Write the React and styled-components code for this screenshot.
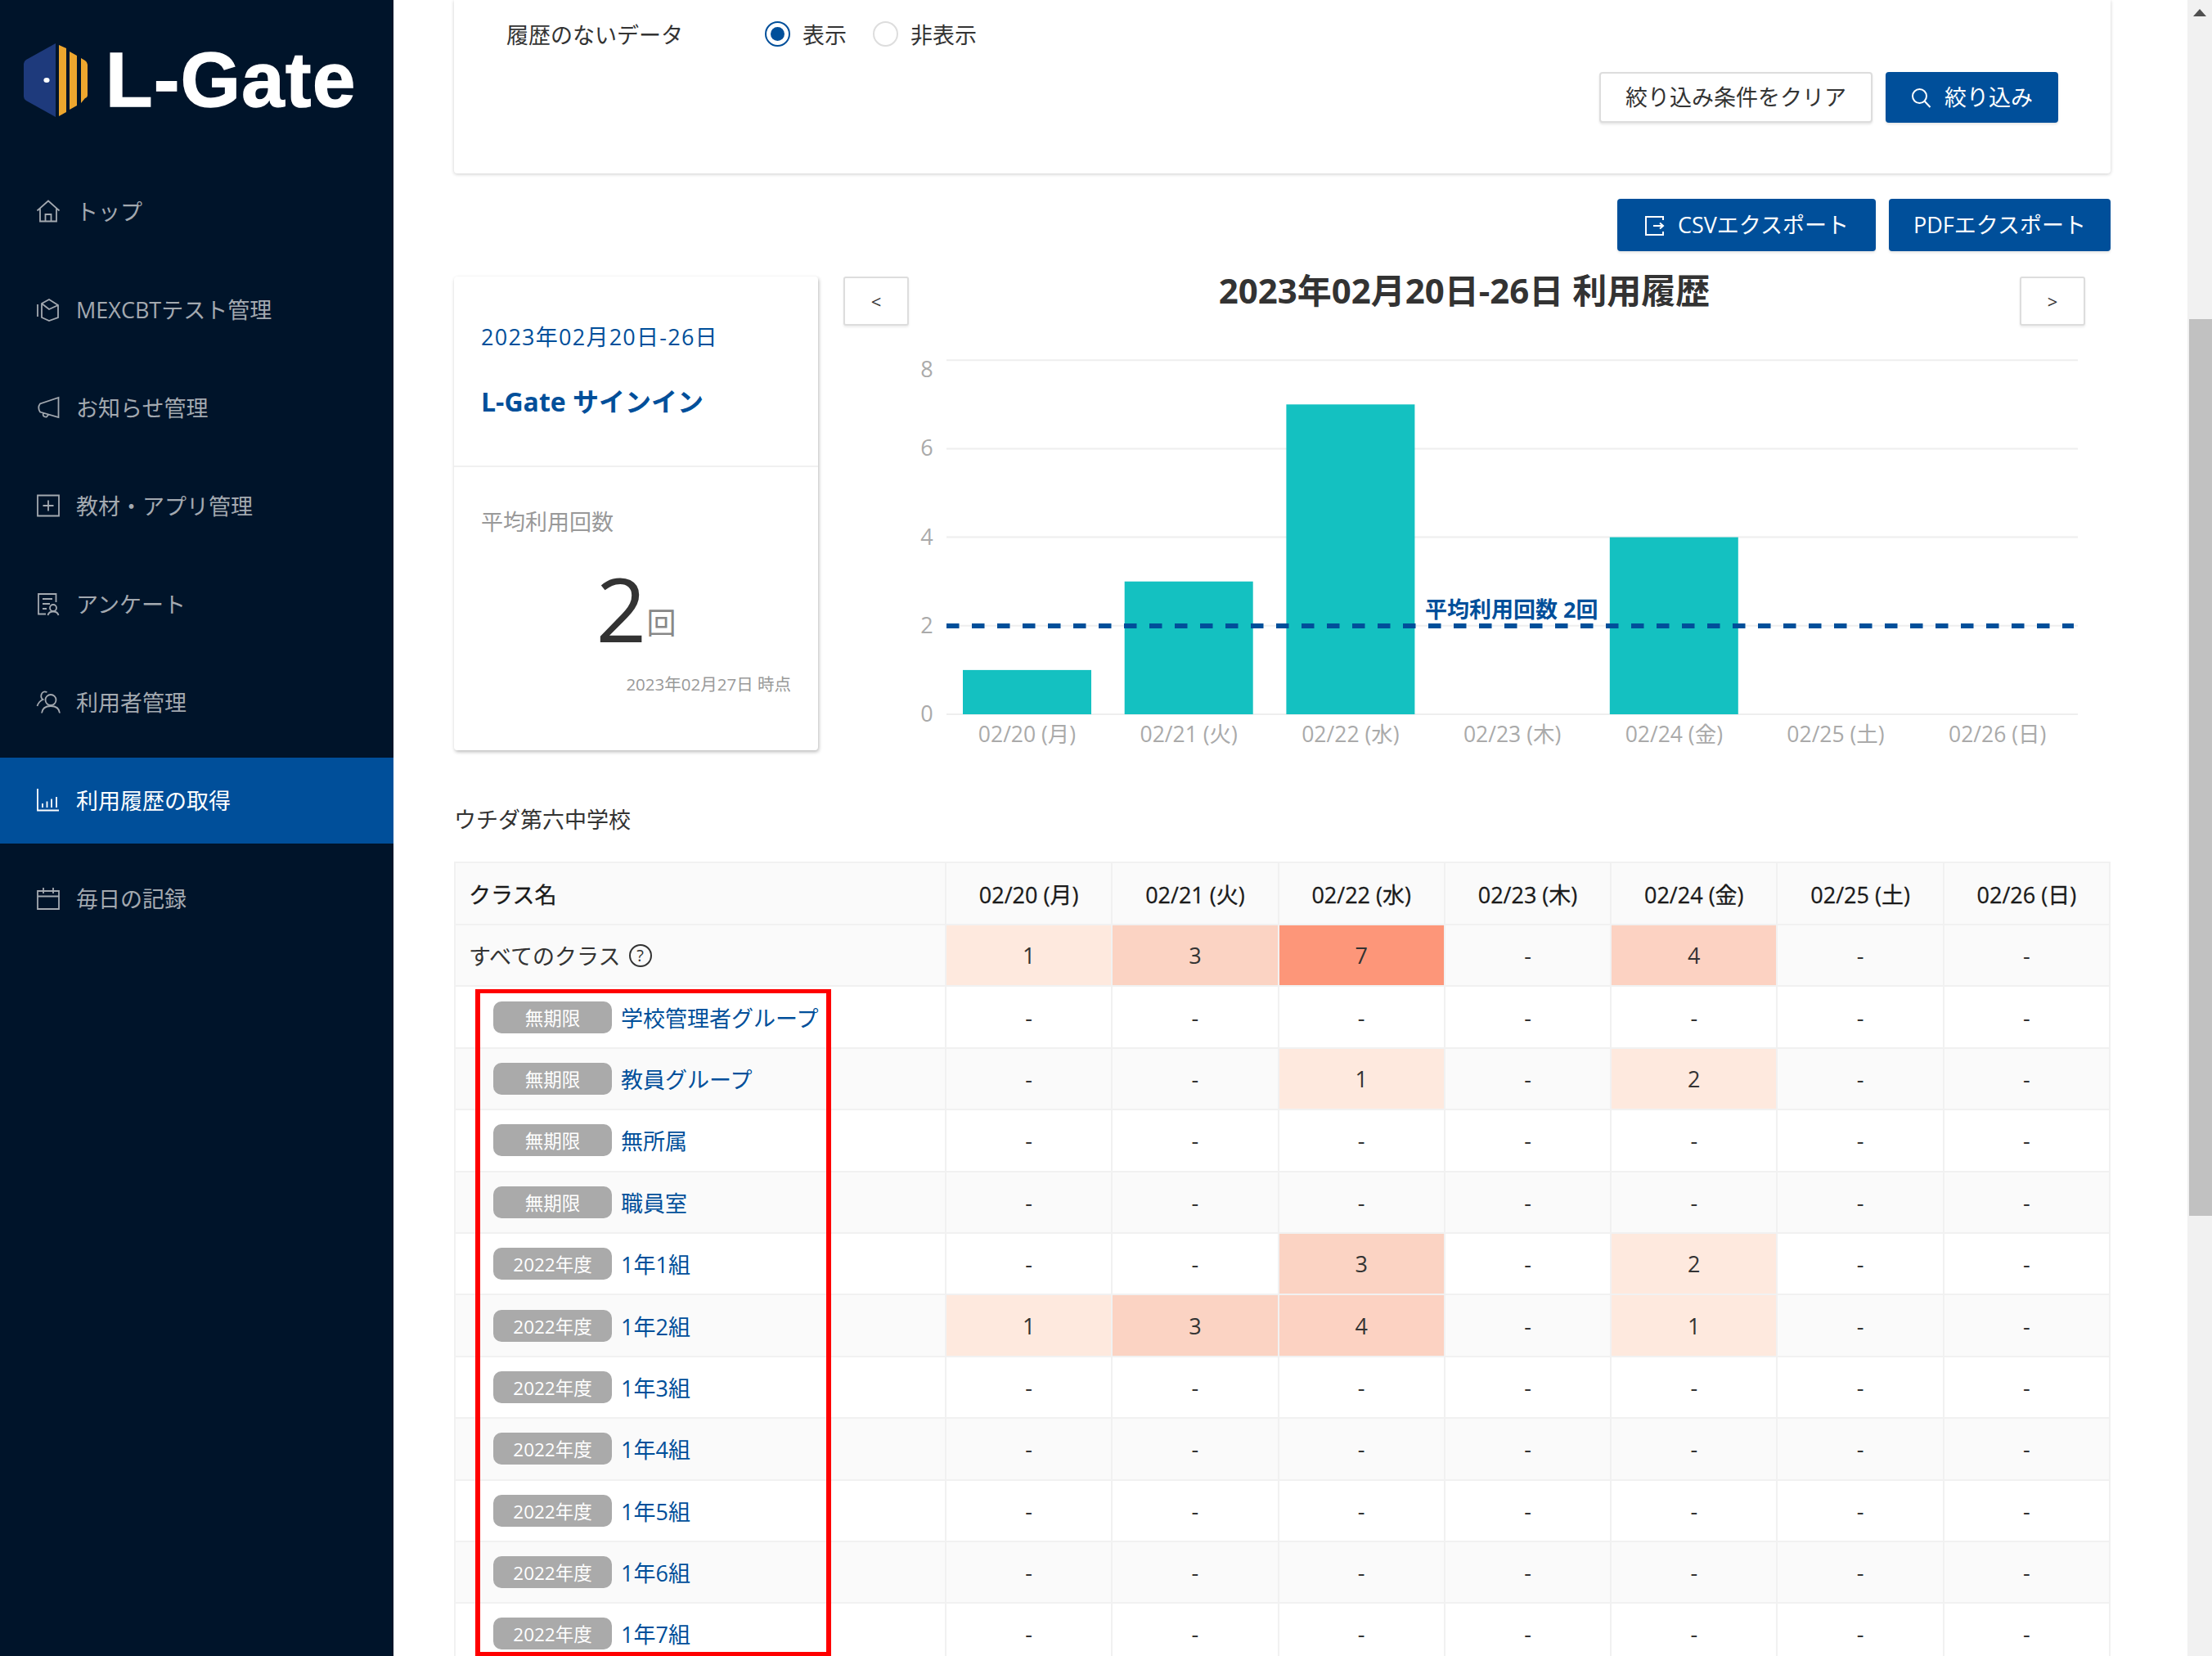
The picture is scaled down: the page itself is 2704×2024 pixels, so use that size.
import React from "react";
import styled, { createGlobalStyle } from "styled-components";

const NAVY = "#004f9a";
const FONT = `"Open Sans", "Noto Sans CJK JP", sans-serif`;

const Global = createGlobalStyle`
  html, body { margin: 0; padding: 0; background: #fff; }
  body { font-family: ${FONT}; color: #333; font-size: 27px; }
  * { box-sizing: border-box; }
`;

const Page = styled.div`
  width: 2704px;
  height: 2024px;
  display: flex;
  overflow: hidden;
  background: #fff;
`;

/* ---------- sidebar ---------- */
const Sidebar = styled.aside`
  width: 481px;
  flex: none;
  background: #00142a;
  display: flex;
  flex-direction: column;
`;
const Brand = styled.div`
  height: 206px;
  padding: 53px 0 0 29px;
  display: flex;
  align-items: flex-start;
  gap: 22px;
`;
const BrandName = styled.div`
  font-family: "Liberation Sans", Arial, sans-serif;
  font-weight: 700;
  font-size: 94px;
  line-height: 90px;
  letter-spacing: 1.5px;
  color: #fff;
  -webkit-text-stroke: 1.5px #fff;
`;
const NavList = styled.nav`
  display: flex;
  flex-direction: column;
  gap: 15px;
`;
const NavItem = styled.div`
  height: 105px;
  padding: 0 0 2px 44px;
  display: flex;
  align-items: center;
  gap: 19px;
  font-size: 27px;
  color: ${(p) => (p.$active ? "#fff" : "#a3a9b0")};
  background: ${(p) => (p.$active ? NAVY : "transparent")};
`;
const NavGlyph = styled.svg`
  width: 30px;
  height: 30px;
  flex: none;
  fill: none;
  stroke: currentColor;
  stroke-width: 1.8;
`;

/* ---------- main ---------- */
const Main = styled.main`
  flex: 1;
  min-width: 0;
  padding: 0 94px 0 74px;
`;
const FilterCard = styled.section`
  height: 212px;
  padding: 14px 64px 0;
  background: #fff;
  border-radius: 0 0 4px 4px;
  box-shadow: 0 1px 4px rgba(0, 0, 0, 0.2);
`;
const FilterRow = styled.div`
  height: 54px;
  display: flex;
  align-items: center;
`;
const FilterLabel = styled.div`
  width: 316px;
`;
const RadioOption = styled.label`
  display: flex;
  align-items: center;
  gap: 15px;
  margin-right: 32px;
`;
const RadioDot = styled.span`
  width: 31px;
  height: 31px;
  border-radius: 50%;
  border: 2px solid ${(p) => (p.$on ? NAVY : "#ddd")};
  display: flex;
  align-items: center;
  justify-content: center;
  &::after {
    content: "";
    width: 17px;
    height: 17px;
    border-radius: 50%;
    background: ${(p) => (p.$on ? NAVY : "transparent")};
  }
`;
const ButtonRow = styled.div`
  display: flex;
  justify-content: flex-end;
  gap: 16px;
  margin-top: ${(p) => p.$top || 0}px;
`;
const Button = styled.button`
  height: ${(p) => p.$h || 62}px;
  padding: 0 ${(p) => p.$pad || 30}px 3px;
  display: flex;
  align-items: center;
  gap: 16px;
  font: inherit;
  font-size: 27px;
  border-radius: 4px;
  color: ${(p) => (p.$primary ? "#fff" : "#333")};
  background: ${(p) => (p.$primary ? NAVY : "#fff")};
  border: ${(p) => (p.$primary ? "none" : "2px solid #ddd")};
  box-shadow: 0 2px 3px rgba(0, 0, 0, 0.1);
`;
const BtnGlyph = styled.svg`
  width: 25px;
  height: 25px;
  flex: none;
  fill: none;
  stroke: #fff;
  stroke-width: 2;
  margin-top: 3px;
`;

/* ---------- overview ---------- */
const Overview = styled.section`
  display: flex;
  margin-top: 31px;
`;
const SummaryCard = styled.div`
  width: 445px;
  height: 579px;
  flex: none;
  background: #fff;
  border-radius: 4px;
  box-shadow: 1px 2px 4px rgba(0, 0, 0, 0.28);
  display: flex;
  flex-direction: column;
`;
const SummaryHead = styled.div`
  height: 233px;
  padding: 55px 33px 0;
  border-bottom: 2px solid #f0f0f0;
`;
const SummaryDate = styled.div`
  color: ${NAVY};
  line-height: 38px;
  letter-spacing: 1.25px;
`;
const SummaryTitle = styled.div`
  color: ${NAVY};
  font-weight: 700;
  font-size: 32px;
  line-height: 44px;
  margin-top: 38px;
`;
const SummaryBody = styled.div`
  flex: 1;
  padding: 48px 33px 0;
`;
const SummaryLabel = styled.div`
  color: #999;
  line-height: 38px;
`;
const BigRow = styled.div`
  display: flex;
  justify-content: center;
  align-items: flex-end;
  gap: 0;
  margin-top: 33px;
`;
const BigNumber = styled.span`
  font-size: 108px;
  line-height: 1;
  color: #333;
`;
const BigUnit = styled.span`
  display: block;
  margin-bottom: 18px;
  font-size: 36px;
  line-height: 36px;
  color: #888;
`;
const AsOf = styled.div`
  margin-top: 23px;
  text-align: right;
  font-size: 20.5px;
  line-height: 30px;
  color: #999;
`;
const ChartPanel = styled.div`
  width: 1518px;
  margin-left: 31px;
`;
const ChartNav = styled.div`
  display: flex;
  justify-content: space-between;
  align-items: flex-start;
`;
const ChartTitle = styled.h2`
  margin: 0;
  font-size: 42px;
  line-height: 34px;
  font-weight: 700;
  color: #333;
`;
const PageButton = styled.button`
  width: 80px;
  height: 60px;
  font: inherit;
  font-size: 22px;
  color: #333;
  background: #fff;
  border: 2px solid #ddd;
  border-radius: 3px;
  box-shadow: 0 2px 3px rgba(0, 0, 0, 0.08);
`;
const ChartSvg = styled.svg`
  display: block;
  width: 1518px;
  height: 510px;
  margin-top: 12px;
  text {
    font-family: ${FONT};
    font-size: 27px;
    fill: #aaa;
  }
  text.day {
    font-size: 26.5px;
  }
  text.avg {
    font-size: 27px;
    font-weight: 700;
    fill: ${NAVY};
  }
`;

/* ---------- table ---------- */
const SchoolName = styled.div`
  margin-top: 63px;
  line-height: 38px;
`;
const TableWrap = styled.div`
  position: relative;
  margin-top: 32px;
`;
const Table = styled.table`
  width: 2025px;
  table-layout: fixed;
  border-collapse: collapse;
`;
const NameCol = styled.col`
  width: 600px;
`;
const HeadCell = styled.th`
  height: 76px;
  padding: 0;
  font-size: 27px;
  font-weight: 400;
  color: #1a1a1a;
  -webkit-text-stroke: 0.3px #1a1a1a;
  background: #fafafa;
  border: 2px solid #f1f1f1;
  text-align: ${(p) => (p.$left ? "left" : "center")};
  padding-left: ${(p) => (p.$left ? "16px" : "0")};
`;
const Row = styled.tr`
  background: ${(p) => (p.$alt ? "#fafafa" : "#fff")};
`;
const NameCell = styled.td`
  height: 75.4px;
  padding: 0 0 0 ${(p) => (p.$all ? 16 : 46)}px;
  border: 2px solid #f1f1f1;
  white-space: nowrap;
`;
const NameInner = styled.div`
  display: flex;
  align-items: center;
  gap: ${(p) => p.$gap}px;
`;
const Badge = styled.span`
  width: 145px;
  height: 39px;
  flex: none;
  display: flex;
  align-items: center;
  justify-content: center;
  border-radius: 10px;
  background: #aaa;
  color: #fff;
  font-size: 22.5px;
`;
const ClassLink = styled.a`
  color: ${NAVY};
  font-size: 27px;
`;
const Help = styled.span`
  width: 28px;
  height: 28px;
  flex: none;
  border: 2px solid #333;
  border-radius: 50%;
  display: flex;
  align-items: center;
  justify-content: center;
  font-size: 20px;
  color: #333;
`;
const DataCell = styled.td`
  height: 75.4px;
  padding: 0;
  text-align: center;
  font-size: 27px;
  color: #333;
  border: 2px solid #f1f1f1;
  background: ${(p) => p.$heat || "transparent"};
`;
const Annotation = styled.div`
  position: absolute;
  left: 26px;
  top: 156px;
  width: 435px;
  height: 815px;
  border-style: solid;
  border-color: #ff0000;
  border-width: 5px 6px;
  pointer-events: none;
`;

/* ---------- scrollbar ---------- */
const ScrollTrack = styled.div`
  width: 30px;
  flex: none;
  background: #f1f1f1;
`;
const ScrollArrow = styled.div`
  width: 0;
  height: 0;
  margin: 11px auto 0;
  border-left: 8px solid transparent;
  border-right: 8px solid transparent;
  border-bottom: 9px solid #505050;
`;
const ScrollThumb = styled.div`
  height: 1096px;
  margin: 370px 0 0 2px;
  background: #c1c1c1;
`;

/* ---------- drawings ---------- */
const Logo = () => (
  <svg width="78" height="90" viewBox="0 0 78 90" style={{ flex: "none" }}>
    <path d="M39 0V90L3 70Q0 68 0 65V25Q0 22 3 20Z" fill="#1e3a7c" />
    <ellipse cx="28" cy="45" rx="3.6" ry="3" fill="#fff" />
    <path d="M43 2L52 6V84L43 89Z" fill="#eda62e" />
    <path d="M56 10L65 15V76L56 81Z" fill="#eda62e" />
    <path d="M70 18L75 21Q78 23 78 26V63Q78 66 75 67L70 73Z" fill="#eda62e" />
  </svg>
);

const icons = {
  home: (
    <path d="M1.5 14.5L15 2.5L28.5 14.5M5 12V27.5H25V12M11.5 27.5V19H18.5V27.5" />
  ),
  test: (
    <path d="M2 9V24M7 12V25L16 29L27 25V10L16 3L7 8V12M7 8L16 15L27 10" />
  ),
  notice: (
    <path d="M27.5 3V27L5 20.5Q1.5 15 5 10.5ZM9 21.5Q7.5 27 13 26.5L15 24" />
  ),
  plus: <path d="M2 2.5H28V27.5H2ZM15 8.5V21.5M8.5 15H21.5" />,
  survey: (
    <>
      <path d="M24.5 13V3H3V27.5H12M8 9H20M8 15H17M8 21H13" />
      <circle cx="21" cy="20" r="4" />
      <path d="M14.5 29Q15.5 24.5 21 24.5Q26.5 24.5 27.5 29" />
    </>
  ),
  users: (
    <>
      <circle cx="18" cy="12.5" r="6.5" />
      <path d="M7 28.5Q8 20 18 20Q28 20 29 28.5" />
      <path d="M13.5 3Q8 1 6.5 6Q5.5 10 8.5 12Q3.5 14 1.5 20" />
    </>
  ),
  chart: (
    <path d="M2 1V27.5H28M8 24V19M13.5 24V16.5M19 24V13.5M25 24V11" />
  ),
  calendar: (
    <path d="M2 6H28V28H2ZM2 12.5H28M9 2V9M21 2V9" />
  ),
};

const NavIcon = ({ name }) => <NavGlyph viewBox="0 0 30 30">{icons[name]}</NavGlyph>;

const SearchIcon = () => (
  <BtnGlyph viewBox="0 0 25 25">
    <circle cx="10.5" cy="10.5" r="8.5" />
    <path d="M16.5 16.5L23.5 24" />
  </BtnGlyph>
);
const ExportIcon = () => (
  <BtnGlyph viewBox="0 0 25 25">
    <path d="M23 6V2H2V24H23V20M11 13H23M19 9.5L23 13L19 16.5" />
  </BtnGlyph>
);

/* ---------- data ---------- */
const NAV = [
  ["home", "トップ"],
  ["test", "MEXCBTテスト管理"],
  ["notice", "お知らせ管理"],
  ["plus", "教材・アプリ管理"],
  ["survey", "アンケート"],
  ["users", "利用者管理"],
  ["chart", "利用履歴の取得", true],
  ["calendar", "毎日の記録"],
];
const DAYS = ["02/20 (月)", "02/21 (火)", "02/22 (水)", "02/23 (木)", "02/24 (金)", "02/25 (土)", "02/26 (日)"];
const TOTALS = [1, 3, 7, 0, 4, 0, 0];
const HEAT = { 1: "#fee9de", 2: "#fee9de", 3: "#fbd3c3", 4: "#fcd2c2", 7: "#fd9679" };
const ROWS = [
  ["無期限", "学校管理者グループ", [0, 0, 0, 0, 0, 0, 0]],
  ["無期限", "教員グループ", [0, 0, 1, 0, 2, 0, 0]],
  ["無期限", "無所属", [0, 0, 0, 0, 0, 0, 0]],
  ["無期限", "職員室", [0, 0, 0, 0, 0, 0, 0]],
  ["2022年度", "1年1組", [0, 0, 3, 0, 2, 0, 0]],
  ["2022年度", "1年2組", [1, 3, 4, 0, 1, 0, 0]],
  ["2022年度", "1年3組", [0, 0, 0, 0, 0, 0, 0]],
  ["2022年度", "1年4組", [0, 0, 0, 0, 0, 0, 0]],
  ["2022年度", "1年5組", [0, 0, 0, 0, 0, 0, 0]],
  ["2022年度", "1年6組", [0, 0, 0, 0, 0, 0, 0]],
  ["2022年度", "1年7組", [0, 0, 0, 0, 0, 0, 0]],
];

const Cells = ({ values }) =>
  values.map((v, i) => (
    <DataCell key={i} $heat={HEAT[v]}>
      {v || "-"}
    </DataCell>
  ));

/* chart is drawn in page coordinates through its viewBox */
const UNIT = 54.1;
const BASE = 873;
const Chart = () => (
  <ChartSvg viewBox="1031 410 1518 510">
    {[0, 2, 4, 6, 8].map((t) => (
      <line key={t} x1="1157" x2="2540" y1={BASE - t * UNIT} y2={BASE - t * UNIT} stroke="#eee" strokeWidth="2" />
    ))}
    {[0, 2, 4, 6, 8].map((t) => (
      <text key={t} x="1133" y={(t === 8 ? 452 : BASE - t * UNIT) + 9} textAnchor="middle">
        {t}
      </text>
    ))}
    {TOTALS.map((v, i) =>
      v ? (
        <rect key={i} x={1177 + i * 197.7} y={BASE - v * UNIT} width="157" height={v * UNIT} fill="#14c1c1" />
      ) : null
    )}
    <line x1="1157" x2="2535" y1="765" y2="765" stroke={NAVY} strokeWidth="6" strokeDasharray="15.5 15.5" />
    <text className="avg" x="1742" y="755">
      平均利用回数 2回
    </text>
    {DAYS.map((d, i) => (
      <text key={d} className="day" x={1255.5 + i * 197.7} y="907" textAnchor="middle">
        {d}
      </text>
    ))}
  </ChartSvg>
);

export default function App() {
  return (
    <Page>
      <Global />
      <Sidebar>
        <Brand>
          <Logo />
          <BrandName>L-Gate</BrandName>
        </Brand>
        <NavList>
          {NAV.map(([icon, label, active]) => (
            <NavItem key={label} $active={active}>
              <NavIcon name={icon} />
              {label}
            </NavItem>
          ))}
        </NavList>
      </Sidebar>

      <Main>
        <FilterCard>
          <FilterRow>
            <FilterLabel>履歴のないデータ</FilterLabel>
            <RadioOption>
              <RadioDot $on />
              表示
            </RadioOption>
            <RadioOption>
              <RadioDot />
              非表示
            </RadioOption>
          </FilterRow>
          <ButtonRow $top={20}>
            <Button>絞り込み条件をクリア</Button>
            <Button $primary $pad={31}>
              <SearchIcon />
              絞り込み
            </Button>
          </ButtonRow>
        </FilterCard>

        <ButtonRow $top={31}>
          <Button $primary $h={64} $pad={33}>
            <ExportIcon />
            CSVエクスポート
          </Button>
          <Button $primary $h={64} $pad={30}>
            PDFエクスポート
          </Button>
        </ButtonRow>

        <Overview>
          <SummaryCard>
            <SummaryHead>
              <SummaryDate>2023年02月20日-26日</SummaryDate>
              <SummaryTitle>L-Gate サインイン</SummaryTitle>
            </SummaryHead>
            <SummaryBody>
              <SummaryLabel>平均利用回数</SummaryLabel>
              <BigRow>
                <BigNumber>2</BigNumber>
                <BigUnit>回</BigUnit>
              </BigRow>
              <AsOf>2023年02月27日 時点</AsOf>
            </SummaryBody>
          </SummaryCard>
          <ChartPanel>
            <ChartNav>
              <PageButton>&lt;</PageButton>
              <ChartTitle>2023年02月20日-26日 利用履歴</ChartTitle>
              <PageButton>&gt;</PageButton>
            </ChartNav>
            <Chart />
          </ChartPanel>
        </Overview>

        <SchoolName>ウチダ第六中学校</SchoolName>
        <TableWrap>
          <Table>
            <colgroup>
              <NameCol />
              {DAYS.map((d) => (
                <col key={d} />
              ))}
            </colgroup>
            <thead>
              <tr>
                <HeadCell $left>クラス名</HeadCell>
                {DAYS.map((d) => (
                  <HeadCell key={d}>{d}</HeadCell>
                ))}
              </tr>
            </thead>
            <tbody>
              <Row $alt>
                <NameCell $all>
                  <NameInner $gap={10}>
                    すべてのクラス
                    <Help>?</Help>
                  </NameInner>
                </NameCell>
                <Cells values={TOTALS} />
              </Row>
              {ROWS.map(([badge, name, values], i) => (
                <Row key={name} $alt={i % 2 === 1}>
                  <NameCell>
                    <NameInner $gap={11}>
                      <Badge>{badge}</Badge>
                      <ClassLink>{name}</ClassLink>
                    </NameInner>
                  </NameCell>
                  <Cells values={values} />
                </Row>
              ))}
            </tbody>
          </Table>
          <Annotation />
        </TableWrap>
      </Main>

      <ScrollTrack>
        <ScrollArrow />
        <ScrollThumb />
      </ScrollTrack>
    </Page>
  );
}
